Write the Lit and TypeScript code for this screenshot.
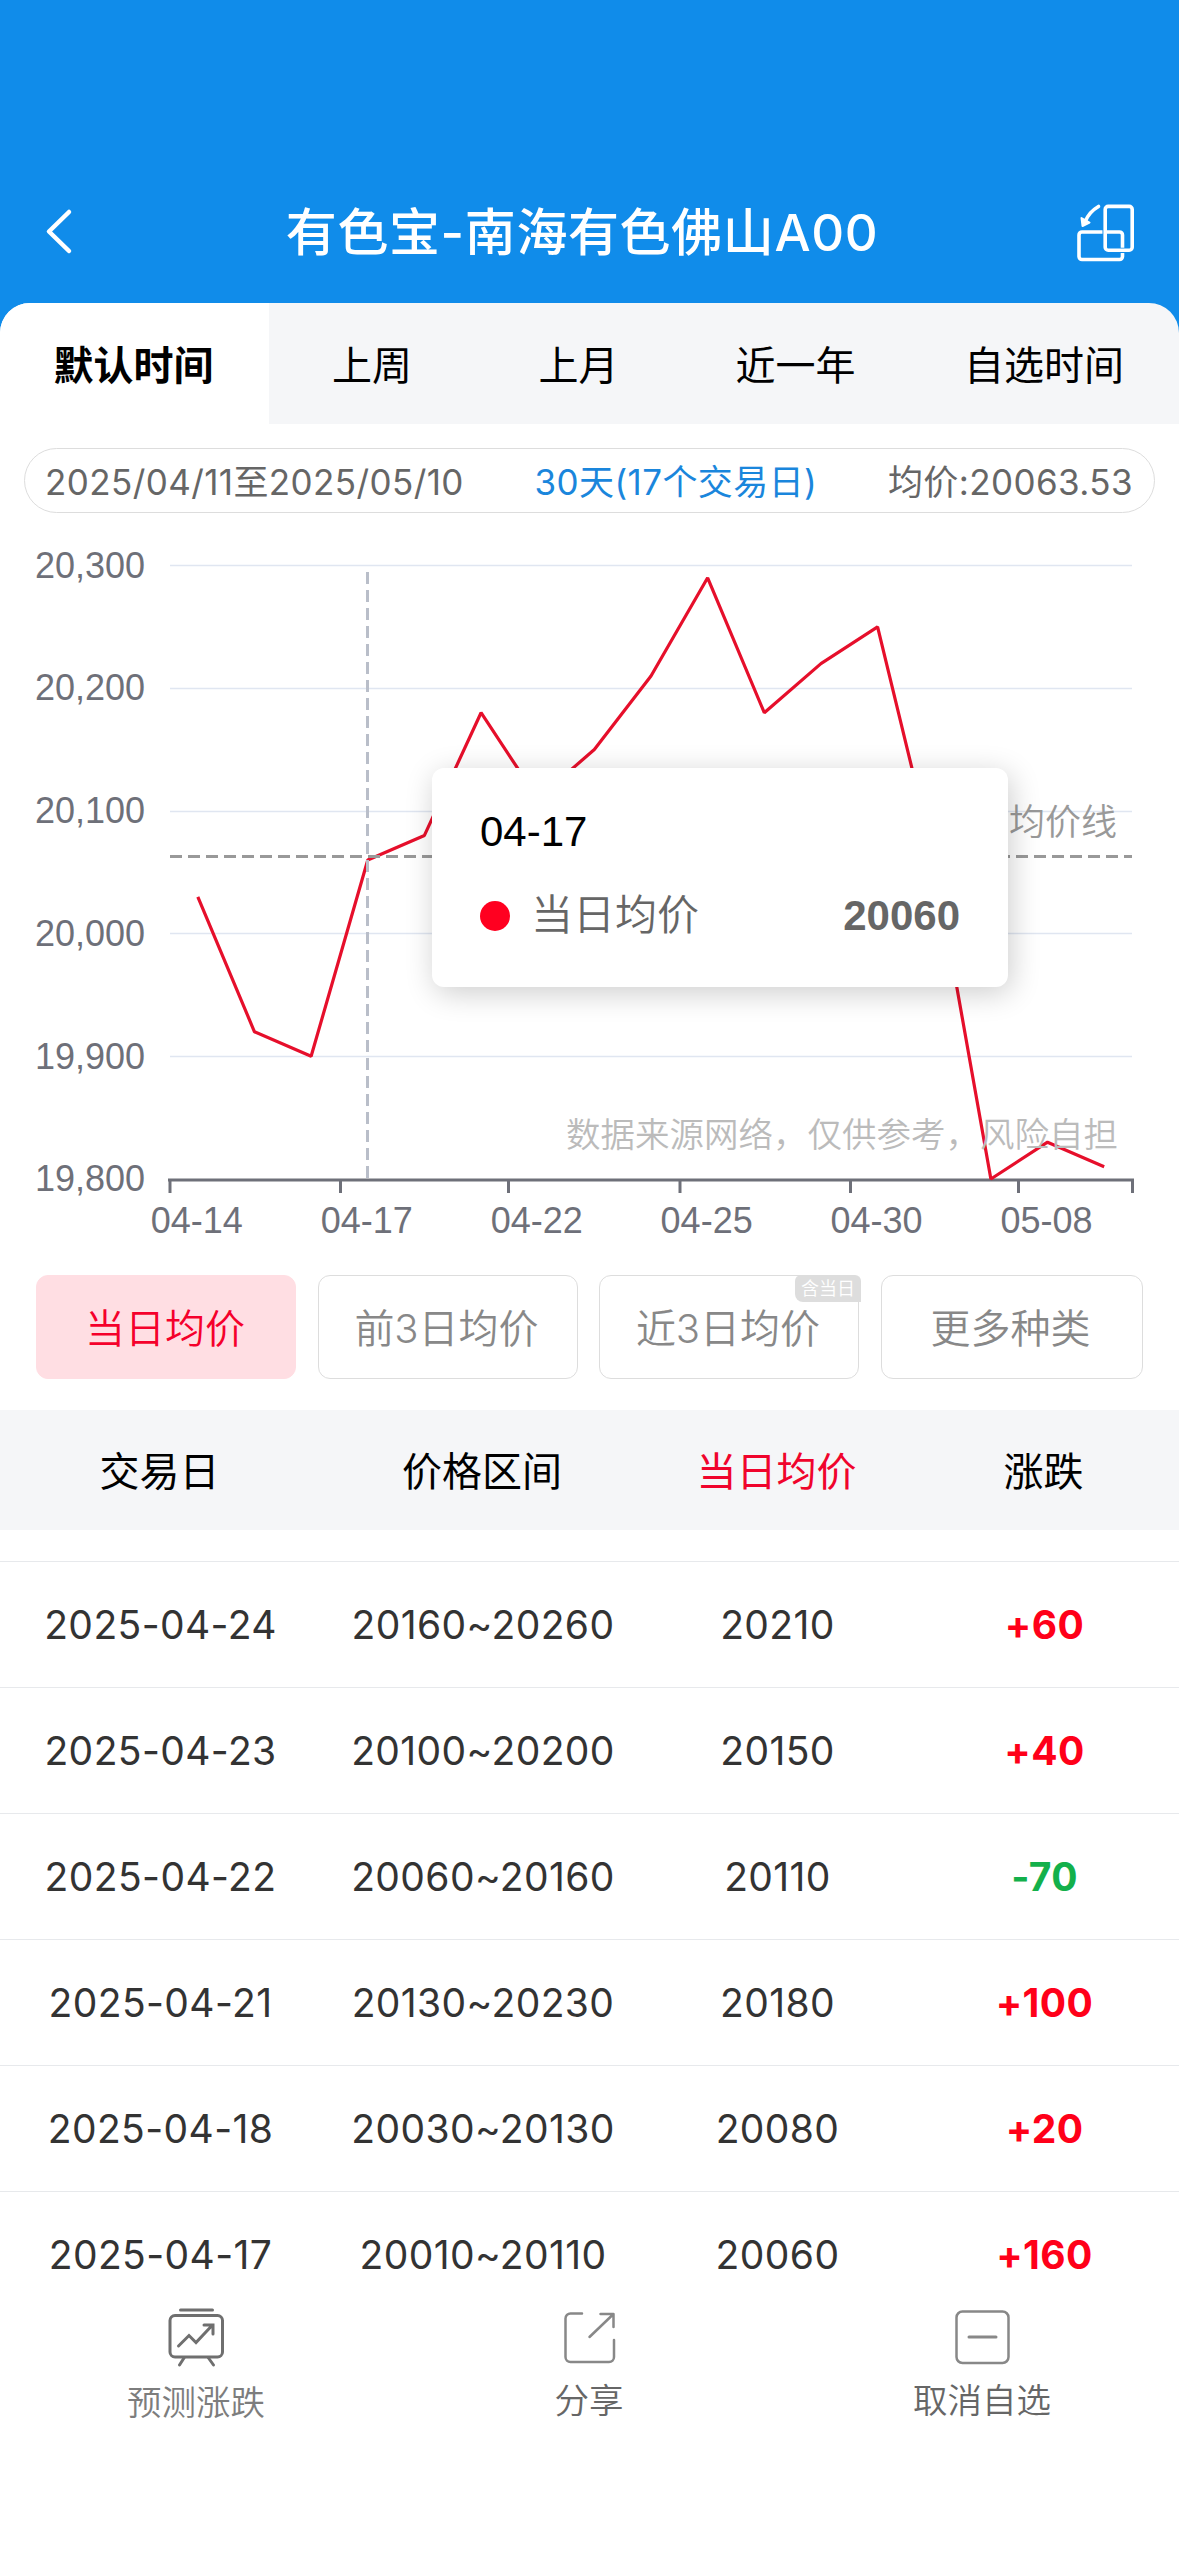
import { LitElement, html, css, svg } from "lit";
import { customElement } from "lit/decorators.js";
import { classMap } from "lit/directives/class-map.js";

const POINTS = [20030, 19920, 19900, 20060, 20080, 20180, 20110, 20150, 20210, 20290, 20180, 20220, 20250, 20060, 19800, 19830, 19810];
const LEFT = 169.5;
const RIGHT = 1132.5;
const BASE = 649;
const STEP = (RIGHT - LEFT) / POINTS.length;
const px = (i: number) => LEFT + STEP * (i + 0.5);
const py = (v: number) => BASE - (v - 19800) * 1.227;

@customElement("price-chart")
export class PriceChart extends LitElement {
  static styles = css`
    :host { display: block; position: relative; height: 745px; }
    .plot { display: block; width: 1179px; height: 745px; }
    .axis { font: 36px "Liberation Sans", sans-serif; fill: #6e7079; }
    .cjk { font-family: "Noto Sans CJK SC", sans-serif; font-weight: 350; }
    .tip { position: absolute; left: 432px; top: 238px; width: 576px; height: 219px; box-sizing: border-box;
      padding: 40px 48px; border-radius: 12px; background: #fff; box-shadow: 3px 6px 30px rgba(0, 0, 0, 0.2);
      font: 42px/48px "Liberation Sans", "Noto Sans CJK SC", sans-serif; color: #666; }
    .day { color: #000; }
    .row { display: flex; align-items: center; margin-top: 36px; height: 48px; }
    .dot { width: 30px; height: 30px; border-radius: 50%; background: #ff0020; margin-right: 21px; }
    .name { flex: 1; font-weight: 350; }
    .val { font-weight: 700; }
  `;

  render() {
    const rows = [20300, 20200, 20100, 20000, 19900, 19800];
    const labels = ["04-14", "04-17", "04-22", "04-25", "04-30", "05-08"];
    const ticks = [170, 340.5, 508.5, 680, 850.5, 1018.5, 1132.5];
    return html`
      <svg class="plot" viewBox="0 0 1179 745">
        ${rows.map((v) => svg`
          ${v > 19800 ? svg`<path d="M170 ${Math.round(py(v) - 0.3) + 0.5}H1132" stroke="#e0e6f1" stroke-width="1.5"/>` : ""}
          <text class="axis" x="145" y="${py(v) + 12.2}" text-anchor="end">${v.toLocaleString("en-US")}</text>`)}
        <path d="M168 650H1134" stroke="#6e7079" stroke-width="3"/>
        ${ticks.map((x) => svg`<path d="M${x} 649V663" stroke="#6e7079" stroke-width="3"/>`)}
        ${labels.map((t, i) => svg`<text class="axis" x="${px(i * 3) - 1}" y="703" text-anchor="middle">${t}</text>`)}
        <polyline points="${POINTS.map((v, i) => `${px(i)},${py(v)}`).join(" ")}" fill="none" stroke="#e60f2b" stroke-width="3.2" stroke-linejoin="bevel"/>
        <path d="M170 326.5H1132" stroke="#999" stroke-width="3" stroke-dasharray="12 6"/>
        <path d="M367.5 42V648" stroke="#b9bec9" stroke-width="3" stroke-dasharray="12 6"/>
        <text class="cjk" x="1009" y="305" font-size="36" fill="#999">均价线</text>
        <text class="cjk" x="566" y="617" font-size="34.5" fill="#bbb">数据来源网络，仅供参考，风险自担</text>
      </svg>
      <div class="tip">
        <div class="day">04-17</div>
        <div class="row"><span class="dot"></span><span class="name">当日均价</span><span class="val">20060</span></div>
      </div>`;
  }
}

@customElement("app-root")
export class AppRoot extends LitElement {
  static styles = css`
    :host { display: block; width: 1179px; height: 2556px; overflow: hidden; background: #fff;
      font-family: Inter, "Noto Sans CJK SC", sans-serif; color: #000; }
    svg { display: block; fill: none; stroke-linecap: round; stroke-linejoin: round; }
    .page { display: flex; flex-direction: column; height: 2556px; }
    .top { background: #108cea; }
    .nav { display: flex; align-items: center; height: 143px; padding: 160px 44px 0 41px; }
    .title { flex: 1; text-align: center; color: #fff; font-size: 51px; font-weight: 500; line-height: 70px; letter-spacing: 0.6px; padding: 2px 0 0 16px; }
    .tabs { display: grid; grid-template-columns: 269px 205px 208px 226px 271px; height: 121px; border-radius: 30px 30px 0 0; overflow: hidden; background: #f5f6f8; }
    .tab { display: flex; align-items: center; justify-content: center; font-size: 40px; padding: 0 0 2px 1px; }
    .tab.on { background: #fff; font-weight: 700; padding: 0 2px 2px 0; }
    .pill { display: flex; align-items: center; justify-content: space-between; box-sizing: border-box; height: 65px;
      margin: 24px 24px 0; padding: 0 21px 3px 20px; border: 1.5px solid #ddd; border-radius: 33px; font-size: 35px; letter-spacing: 0.4px; color: #666; }
    .span { color: #1a86dc; }
    .chart { margin-top: 17px; }
    .kinds { display: grid; grid-template-columns: 260px 260px 260px 262px; column-gap: 21.5px; padding: 0 36px; height: 104px; }
    .kind { position: relative; display: flex; align-items: center; justify-content: center; box-sizing: border-box; border: 1.5px solid #ddd;
      border-radius: 12px; color: #888; font-size: 40px; font-weight: 350; padding: 0 2px 2px 0; }
    .kind.on { background: #ffdee3; border-color: #ffdee3; color: #f5002b; }
    .badge { position: absolute; right: -3px; top: -1px; width: 66px; height: 27px; background: #ddd; color: #fff;
      border-radius: 6px 6px 0 8px; font-size: 18px; line-height: 27px; text-align: center; }
    .line { display: grid; grid-template-columns: 319px 326px 263px 271px; align-items: center; text-align: center; }
    .head { margin-top: 31px; height: 120px; box-sizing: border-box; padding-bottom: 2px; background: #f5f6f8; font-size: 40px; }
    .hot { color: #f0042c; }
    .table { padding-top: 31px; }
    .item { box-sizing: border-box; height: 126px; padding-left: 1px; border-top: 1.5px solid #e7e9ec; font-size: 39px; letter-spacing: 0.4px; color: #333; }
    .delta { font-weight: 700; color: #ff0019; }
    .delta.down { color: #13b04b; }
    .foot { display: grid; grid-template-columns: 1fr 1fr 1fr; margin-top: -10px; background: #fff; }
    .act { display: flex; flex-direction: column; align-items: center; font-size: 34.5px; line-height: 50px; color: #666; font-weight: 350; padding-right: 1px; }
    .act.dim { color: #7d7d7d; }
    .act.dim .cap { padding-top: 2px; }
    .cap { margin-top: 9px; }
  `;

  render() {
    const tabs = ["默认时间", "上周", "上月", "近一年", "自选时间"];
    const data = [
      ["2025-04-24", "20160~20260", "20210", "+60"],
      ["2025-04-23", "20100~20200", "20150", "+40"],
      ["2025-04-22", "20060~20160", "20110", "-70"],
      ["2025-04-21", "20130~20230", "20180", "+100"],
      ["2025-04-18", "20030~20130", "20080", "+20"],
      ["2025-04-17", "20010~20110", "20060", "+160"],
    ];
    return html`<div class="page">
      <header class="top">
        <div class="nav">
          <svg width="32" height="48" viewBox="0 0 32 48"><path d="M28 4L8 23.500L28 43" stroke="#fff" stroke-width="4.500"/></svg>
          <div class="title">有色宝-南海有色佛山A00</div>
          <svg width="60" height="68" viewBox="0 0 60 68" stroke="#fff" stroke-width="3.600">
            <rect x="30.200" y="8.400" width="27" height="43.800" rx="3"/>
            <path d="M27.500 34H7a3 3 0 0 0-3 3V58.500a3 3 0 0 0 3 3H44.500a3 3 0 0 0 3-3V55M32 34H44.500a3 3 0 0 1 3 3V49.800" stroke-linecap="butt"/>
            <path d="M23.500 8.500C17.500 12 13 17 10.500 23"/><path d="M6.500 20L7.500 28L14.500 24.500Z" fill="#fff" stroke-width="2"/>
          </svg>
        </div>
        <nav class="tabs">${tabs.map((t, i) => html`<div class=${classMap({ tab: true, on: i === 0 })}>${t}</div>`)}</nav>
      </header>
      <div class="pill"><span>2025/04/11至2025/05/10</span><span class="span">30天(17个交易日)</span><span>均价:20063.53</span></div>
      <price-chart class="chart"></price-chart>
      <div class="kinds">
        <div class="kind on">当日均价</div><div class="kind">前3日均价</div>
        <div class="kind">近3日均价<span class="badge">含当日</span></div><div class="kind">更多种类</div>
      </div>
      <div class="line head"><span>交易日</span><span>价格区间</span><span class="hot">当日均价</span><span>涨跌</span></div>
      <div class="table">${data.map((r) => html`<div class="line item"><span>${r[0]}</span><span>${r[1]}</span><span>${r[2]}</span>
        <span class=${classMap({ delta: true, down: r[3].startsWith("-") })}>${r[3]}</span></div>`)}</div>
      <footer class="foot">
        <div class="act dim">
          <svg width="60" height="60" viewBox="0 0 60 60" stroke="#6f6f6f" stroke-width="3"><path d="M14.500 3H46.500M18 51L13.500 58M42.500 51L47.500 58"/><rect x="4" y="8.500" width="52.500" height="41.500" rx="5"/><path d="M12.500 39L23 28.500L30 35.500L46 18.500M38 18H47V27" stroke-linejoin="miter"/></svg>
          <span class="cap">预测涨跌</span></div>
        <div class="act">
          <svg width="60" height="60" viewBox="0 0 60 60" stroke="#888" stroke-width="2.500"><path d="M23 6.500H11.500a5 5 0 0 0-5 5V50a5 5 0 0 0 5 5H50a5 5 0 0 0 5-5V33M30.500 30L54 7.500M41.500 7H54.500V20"/></svg>
          <span class="cap">分享</span></div>
        <div class="act">
          <svg width="60" height="60" viewBox="0 0 60 60" stroke="#888" stroke-width="2.500"><rect x="4.500" y="4.500" width="52" height="51.500" rx="6"/><path d="M17 30H44" stroke-width="3"/></svg>
          <span class="cap">取消自选</span></div>
      </footer>
    </div>`;
  }
}
